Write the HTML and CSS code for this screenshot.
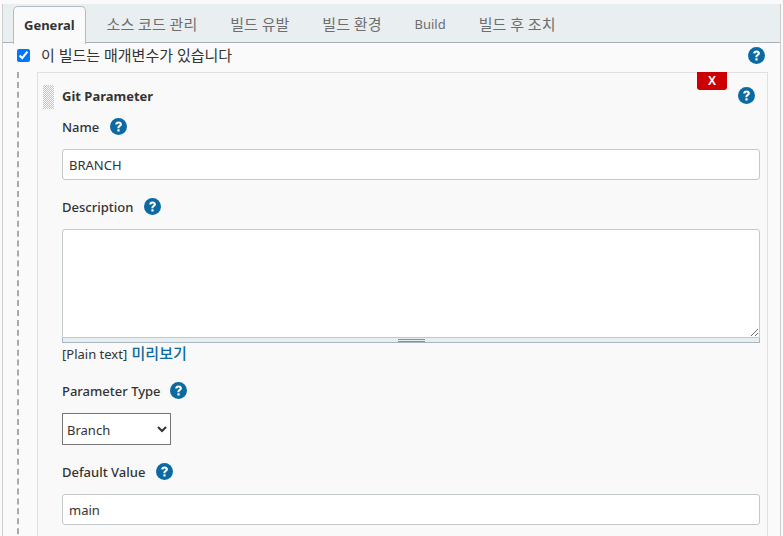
FILE: index.html
```html
<!DOCTYPE html>
<html lang="ko">
<head>
  <meta charset="UTF-8">
  <title>Jenkins 빌드 설정</title>
  <link rel="stylesheet" href="styles.css">
</head>
<body>
  <svg class="defs">
    <symbol id="help" viewBox="0 0 17 17">
      <circle cx="8.5" cy="8.5" r="8.5" fill="#0b6aa2"/>
      <path d="M5.2 6.5c0-1.9 1.4-3.1 3.4-3.1s3.3 1.1 3.3 2.8c0 1.3-.7 1.9-1.6 2.5-.6.4-.9.7-.9 1.5H7.4c0-1.4.4-2 1.3-2.6.6-.4 1-.8 1-1.3 0-.6-.5-.9-1.1-.9-.7 0-1.2.5-1.3 1.2z" fill="#fff"/>
      <rect x="7.4" y="11.3" width="2.2" height="2.2" fill="#fff"/>
    </symbol>
  </svg>
  <div class="page">
    <div class="tabs">
      <div class="tab active">General</div>
      <div class="tab ko">소스 코드 관리</div>
      <div class="tab ko">빌드 유발</div>
      <div class="tab ko">빌드 환경</div>
      <div class="tab">Build</div>
      <div class="tab ko">빌드 후 조치</div>
    </div>
    <div class="option">
      <label class="check"><input type="checkbox" checked> <span class="ko">이 빌드는 매개변수가 있습니다</span></label>
      <svg class="help"><use href="#help"/></svg>
    </div>
    <div class="nested">
      <div class="block">
        <button class="delete">X</button>
        <svg class="help block-help"><use href="#help"/></svg>
        <div class="block-head">
          <div class="handle"></div>
          <b>Git Parameter</b>
        </div>
        <div class="fields">
          <div class="label first">Name <svg class="help"><use href="#help"/></svg></div>
          <input class="text" type="text" value="BRANCH">
          <div class="label desc">Description <svg class="help"><use href="#help"/></svg></div>
          <div class="area">
            <textarea></textarea>
            <div class="grip"></div>
          </div>
          <div class="preview">[Plain text] <a class="ko" href="#">미리보기</a></div>
          <div class="label type">Parameter Type <svg class="help"><use href="#help"/></svg></div>
          <select class="pick"><option>Branch</option></select>
          <div class="label def">Default Value <svg class="help"><use href="#help"/></svg></div>
          <input class="text" type="text" value="main">
        </div>
      </div>
    </div>
  </div>
</body>
</html>
```

FILE: styles.css
```css
html, body {
  height: 100%;
}
body {
  margin: 0;
  padding: 4px 0 0;
  box-sizing: border-box;
  overflow: hidden;
  background: #fafafa;
  font-family: "Noto Sans", "Noto Sans CJK KR", sans-serif;
  font-size: 13px;
  color: #333;
}
.defs {
  display: none;
}
.ko {
  font-size: 15px;
}
.page {
  margin: 0 2px;
  height: 100%;
  background: #fafafa;
  border-left: 1px solid #ccc;
  border-right: 1px solid #ccc;
}
.tabs {
  display: flex;
  height: 39px;
  box-sizing: border-box;
  padding: 2px 0 0 10px;
  background: #e9eef1;
  border-bottom: 1px solid #a9b0b5;
}
.tab {
  padding: 0 17px 0 16px;
  line-height: 37px;
  color: #6e6e6e;
  white-space: nowrap;
}
.tab.active {
  height: 38px;
  box-sizing: border-box;
  margin-right: 5px;
  padding: 0 10px;
  line-height: 36px;
  font-weight: 700;
  color: #333;
  background: #fafafa;
  border: 1px solid #b4bcc2;
  border-bottom: none;
  border-radius: 5px 5px 0 0;
}
.option {
  display: flex;
  align-items: center;
  justify-content: space-between;
  height: 24px;
  padding: 0 15px 0 14px;
}
.check {
  display: flex;
  align-items: center;
  gap: 6px;
  margin-top: -1px;
}
.check input {
  width: 13px;
  height: 13px;
  margin: 1px 5px 0 0;
}
.help {
  width: 17px;
  height: 17px;
  flex: none;
}
.nested {
  margin: 5px 0 0 14px;
  padding-left: 18px;
  border-left: 2px dashed #aaa;
}
.block {
  position: relative;
  margin-right: 12px;
  height: 480px;
  background: #f9f9f9;
  border: 1px solid #e0e0e0;
}
.delete {
  position: absolute;
  top: -1px;
  right: 40px;
  width: 30px;
  height: 18px;
  padding: 0;
  border: none;
  border-radius: 0 0 3px 3px;
  background: #c00;
  color: #fff;
  font: 700 12px "Liberation Sans", sans-serif;
}
.block-help {
  position: absolute;
  top: 14px;
  right: 12px;
}
.block-head {
  display: flex;
  align-items: center;
  gap: 7px;
  height: 26px;
  margin-top: 10px;
  padding-left: 5px;
}
.block-head b {
  margin-left: 1px;
}
.handle {
  width: 11px;
  height: 24px;
  margin-top: 2px;
  background: repeating-conic-gradient(#c4c4c4 0 25%, transparent 0 50%) 0 0 / 2px 2px;
}
.fields {
  display: flex;
  flex-direction: column;
  align-items: flex-start;
  padding: 0 7px 0 24px;
}
.label {
  display: flex;
  align-items: center;
  gap: 11px;
  height: 20px;
  font-weight: 500;
}
.label .help {
  margin-top: -2px;
}
.label.first {
  margin-top: 8px;
}
.label.desc {
  margin-top: 17px;
}
.label.type {
  margin-top: 18px;
  gap: 9px;
}
.label.def {
  margin-top: 17px;
}
.text {
  box-sizing: border-box;
  width: 100%;
  height: 31px;
  margin-top: 12px;
  padding: 0 6px;
  font: inherit;
  color: #333;
  background: #fff;
  border: 1px solid #c3c8cb;
  border-radius: 3px;
}
.area {
  width: 100%;
  margin-top: 12px;
}
.area textarea {
  display: block;
  box-sizing: border-box;
  width: 100%;
  height: 109px;
  padding: 4px 6px;
  background: #fff;
  border: 1px solid #c3c8cb;
  border-radius: 3px 3px 0 0;
}
.grip {
  box-sizing: border-box;
  height: 5px;
  background-color: #e6eef2;
  background-image: linear-gradient(#8a9298, #8a9298), linear-gradient(#8a9298, #8a9298);
  background-repeat: no-repeat;
  background-size: 27px 1px;
  background-position: 335px 1px, 335px 3px;
  border: 1px solid #a9b6be;
  border-top: none;
}
.preview {
  margin-top: 1px;
  line-height: 18px;
}
.preview a {
  margin-left: 1px;
  font-weight: 500;
  color: #0b6aa2;
  text-decoration: none;
}
.pick {
  width: 109px;
  height: 32px;
  margin-top: 12px;
  padding: 1px 0 0;
  font: inherit;
  color: #333;
  background: #fff;
  border: 1px solid #767676;
}
```
